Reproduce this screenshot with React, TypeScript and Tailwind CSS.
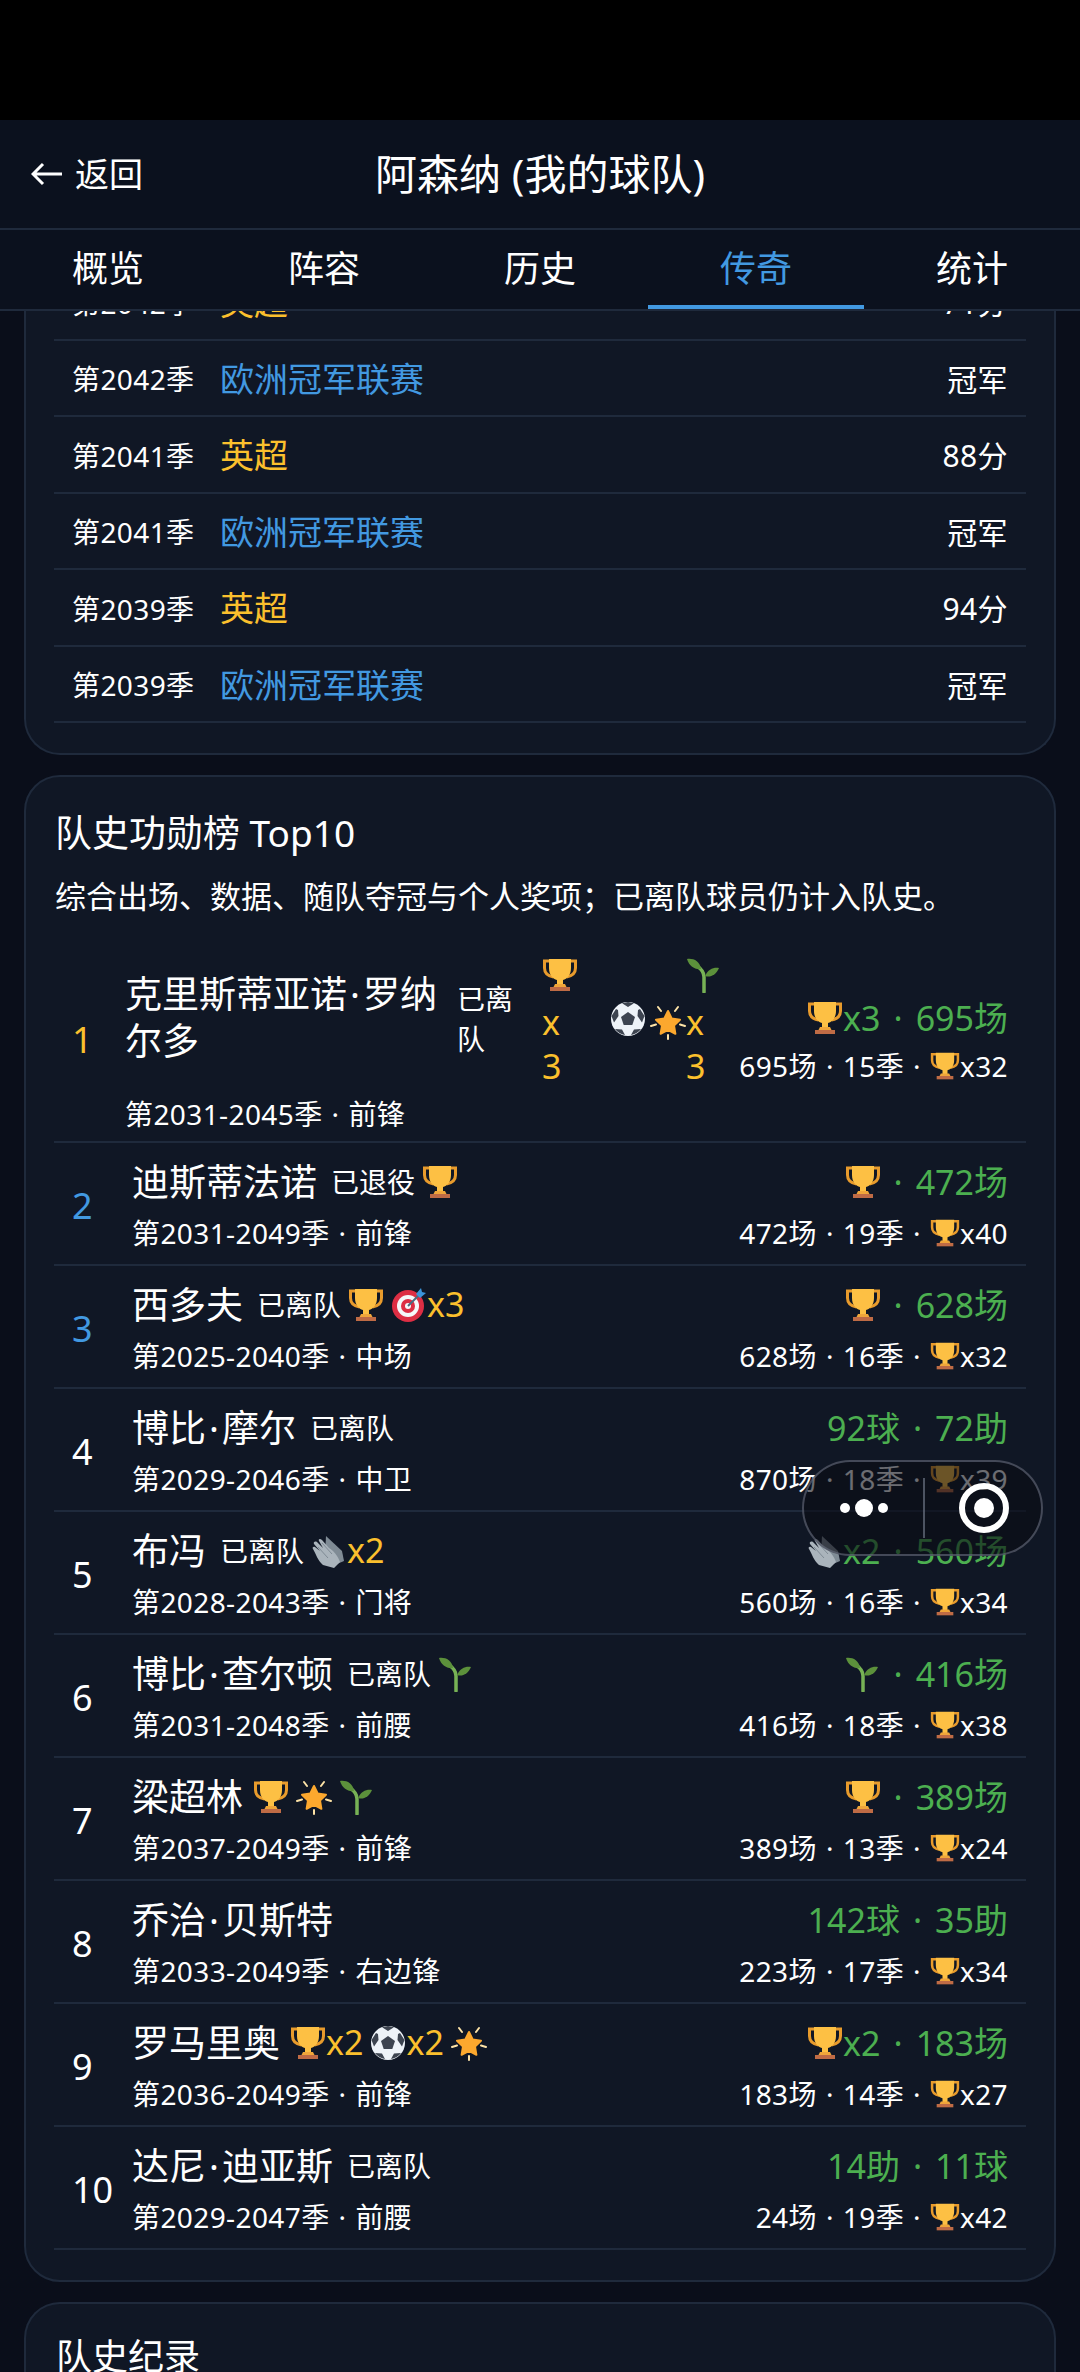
import React from 'react'

const font = { fontFamily: '"Noto Sans", "Noto Sans CJK SC", sans-serif' }

function Trophy({ size = 36 }: { size?: number }) {
  return (
    <svg width={size} height={size} viewBox="0 0 36 36" className="inline-block shrink-0">
      <path d="M8 4H2.500v7c0 5 3.500 8 9 9" fill="none" stroke="#e89b2c" strokeWidth="3" />
      <path d="M28 4h5.500v7c0 5-3.500 8-9 9" fill="none" stroke="#e89b2c" strokeWidth="3" />
      <path d="M7 2h22v9c0 7-4 11-8 12v5h-6v-5c-4-1-8-5-8-12z" fill="#fdc044" />
      <path d="M13 27h10l1.500 3h-13z" fill="#f0a63a" />
      <path d="M8 30h20v4H8z" fill="#bf6b45" />
    </svg>
  )
}

function Ball({ size = 36 }: { size?: number }) {
  return (
    <svg width={size} height={size} viewBox="0 0 36 36" className="inline-block shrink-0">
      <circle cx="18" cy="18" r="17" fill="#eef3f8" />
      <path d="M18 11l7 5-2.700 8h-8.600L11 16z" fill="#3d4450" />
      <path d="M12 2.200 18 1l6 1.200L18 6z M1.500 15 6 8l2 1 .5 6-4.500 6.500z M34.500 15 30 8l-2 1-.5 6 4.500 6.500z M5 28l7 .5 3 5.500c-4-.6-7.500-2.700-10-6z M31 28l-7 .5-3 5.500c4-.6 7.500-2.700 10-6z" fill="#3d4450" />
    </svg>
  )
}

function Star({ size = 36 }: { size?: number }) {
  return (
    <svg width={size} height={size} viewBox="0 0 36 36" className="inline-block shrink-0">
      <path d="M18 7l3.700 7.500 8.300 1.200-6 5.800 1.400 8.300-7.400-3.900-7.400 3.900 1.400-8.300-6-5.800 8.300-1.200z" fill="#fca82e" stroke="#fca82e" strokeWidth="2" strokeLinejoin="round" />
      <path d="M8 3l3 4M28 3l-3 4M1 22l5-1.500M35 22l-5-1.500M18 35v-4" stroke="#fde3a7" strokeWidth="2" strokeLinecap="round" />
    </svg>
  )
}

function Sprout({ size = 36 }: { size?: number }) {
  return (
    <svg width={size} height={size} viewBox="0 0 36 36" className="inline-block shrink-0">
      <path d="M18 35V20c0-6-4-9-7-11" fill="none" stroke="#77b255" strokeWidth="3.500" strokeLinecap="round" />
      <path d="M1 2c6-1 13 2 14 10-6 1-12-3-14-10z" fill="#5c913b" />
      <path d="M33 11c-5-1-11 1-14 8 5 2 11-1 14-8z" fill="#5c913b" />
    </svg>
  )
}

function Target({ size = 36 }: { size?: number }) {
  return (
    <svg width={size} height={size} viewBox="0 0 36 36" className="inline-block shrink-0">
      <circle cx="17" cy="19" r="16" fill="#dd2e44" />
      <circle cx="17" cy="19" r="11" fill="#f5f8fa" />
      <circle cx="17" cy="19" r="7" fill="#dd2e44" />
      <circle cx="17" cy="19" r="3" fill="#f5f8fa" />
      <path d="M17 19 29 7" stroke="#4b6a80" strokeWidth="2" />
      <path d="M25 7l5-6 1 4 4 1-6 5z" fill="#3b94d9" />
    </svg>
  )
}

function Gloves({ size = 36 }: { size?: number }) {
  return (
    <svg width={size} height={size} viewBox="0 0 36 36" className="inline-block shrink-0">
      <path d="M15 3l16 15 2 10-7 3-12-9z" fill="#7f8b95" />
      <path d="M2 16c-1-1 0-3 2-2l5 4-6-7c-1-2 1-3 3-2l6 6-4-7c-1-2 1-3 3-1l7 8c4 2 9 8 11 14l-6 6-11-3C7 28 5 21 2 16z" fill="#aab4bc" />
      <path d="M7 14l10 11M11 10l10 11M15 8l9 10" stroke="#7f8b95" strokeWidth="1" />
    </svg>
  )
}

const iconMap = { trophy: Trophy, ball: Ball, star: Star, sprout: Sprout, target: Target, gloves: Gloves }
type IconName = keyof typeof iconMap

interface Badge {
  icon: IconName
  count?: number
}

interface Legend {
  rank: number
  name: string
  status?: string
  badges: Badge[]
  meta: [string, string]
  best: Badge | null
  bestText: [string, string]
  stats: [string, string]
  cups: number
}

const seasons = [
  { season: '第2042季', league: '英超', result: '71分', gold: true },
  { season: '第2042季', league: '欧洲冠军联赛', result: '冠军', gold: false },
  { season: '第2041季', league: '英超', result: '88分', gold: true },
  { season: '第2041季', league: '欧洲冠军联赛', result: '冠军', gold: false },
  { season: '第2039季', league: '英超', result: '94分', gold: true },
  { season: '第2039季', league: '欧洲冠军联赛', result: '冠军', gold: false },
]

const legends: Legend[] = [
  { rank: 2, name: '迪斯蒂法诺', status: '已退役', badges: [{ icon: 'trophy' }], meta: ['第2031-2049季', '前锋'], best: { icon: 'trophy' }, bestText: ['', '472场'], stats: ['472场', '19季'], cups: 40 },
  { rank: 3, name: '西多夫', status: '已离队', badges: [{ icon: 'trophy' }, { icon: 'target', count: 3 }], meta: ['第2025-2040季', '中场'], best: { icon: 'trophy' }, bestText: ['', '628场'], stats: ['628场', '16季'], cups: 32 },
  { rank: 4, name: '博比·摩尔', status: '已离队', badges: [], meta: ['第2029-2046季', '中卫'], best: null, bestText: ['92球', '72助'], stats: ['870场', '18季'], cups: 39 },
  { rank: 5, name: '布冯', status: '已离队', badges: [{ icon: 'gloves', count: 2 }], meta: ['第2028-2043季', '门将'], best: { icon: 'gloves', count: 2 }, bestText: ['', '560场'], stats: ['560场', '16季'], cups: 34 },
  { rank: 6, name: '博比·查尔顿', status: '已离队', badges: [{ icon: 'sprout' }], meta: ['第2031-2048季', '前腰'], best: { icon: 'sprout' }, bestText: ['', '416场'], stats: ['416场', '18季'], cups: 38 },
  { rank: 7, name: '梁超林', badges: [{ icon: 'trophy' }, { icon: 'star' }, { icon: 'sprout' }], meta: ['第2037-2049季', '前锋'], best: { icon: 'trophy' }, bestText: ['', '389场'], stats: ['389场', '13季'], cups: 24 },
  { rank: 8, name: '乔治·贝斯特', badges: [], meta: ['第2033-2049季', '右边锋'], best: null, bestText: ['142球', '35助'], stats: ['223场', '17季'], cups: 34 },
  { rank: 9, name: '罗马里奥', badges: [{ icon: 'trophy', count: 2 }, { icon: 'ball', count: 2 }, { icon: 'star' }], meta: ['第2036-2049季', '前锋'], best: { icon: 'trophy', count: 2 }, bestText: ['', '183场'], stats: ['183场', '14季'], cups: 27 },
  { rank: 10, name: '达尼·迪亚斯', status: '已离队', badges: [], meta: ['第2029-2047季', '前腰'], best: null, bestText: ['14助', '11球'], stats: ['24场', '19季'], cups: 42 },
]

function Sep() {
  return <span className="mx-[9px]">·</span>
}

function GreenSep() {
  return <span className="mx-[13px]">·</span>
}

function Name({ text }: { text: string }) {
  const parts = text.split('·')
  return (
    <>
      {parts.map((part, i) => (
        <React.Fragment key={i}>
          {i > 0 && <span className="mx-[3px]">·</span>}
          {part}
        </React.Fragment>
      ))}
    </>
  )
}

function BadgeView({ badge }: { badge: Badge }) {
  const Icon = iconMap[badge.icon]
  return (
    <span className="inline-flex items-center">
      <Icon />
      {badge.count ? `x${badge.count}` : ''}
    </span>
  )
}

function rankColor(rank: number) {
  if (rank === 1) return 'text-[#fbc02d]'
  if (rank <= 3) return 'text-[#4299e1]'
  return 'text-white'
}

function Stats({ stats, cups }: { stats: [string, string]; cups: number }) {
  return (
    <div className="flex h-[38px] items-center justify-end whitespace-nowrap text-[28px] leading-[38px] tracking-[0.4px] text-white">
      {stats[0]}
      <Sep />
      {stats[1]}
      <Sep />
      <Trophy size={30} />x{cups}
    </div>
  )
}

function BestLine({ children }: { children: React.ReactNode }) {
  return <div className="flex h-[44px] items-center whitespace-nowrap text-[34px] leading-[44px] text-[#4caf50]">{children}</div>
}

function Meta({ meta }: { meta: [string, string] }) {
  return (
    <div className="h-[38px] whitespace-nowrap text-[28px] leading-[38px] tracking-[0.4px] text-white">
      {meta[0]}
      <Sep />
      {meta[1]}
    </div>
  )
}

function LegendRow({ item }: { item: Legend }) {
  return (
    <div className="flex h-[123px] items-center border-b-2 border-[#1f2a3c] px-[18px] pt-[4px]">
      <div className={`w-[60px] shrink-0 text-[36px] ${rankColor(item.rank)}`}>{item.rank}</div>
      <div className="flex min-w-0 flex-1 flex-col gap-[10px]">
        <div className="flex h-[44px] items-center gap-[10px] whitespace-nowrap">
          <span className="text-[37px] leading-[44px] text-white">
            <Name text={item.name} />
          </span>
          {item.status && <span className="-mr-[3px] ml-[4px] text-[28px] text-white">{item.status}</span>}
          <div className="flex items-center gap-[7px] text-[34px] text-[#fbc02d]">
            {item.badges.map((badge, i) => (
              <BadgeView key={i} badge={badge} />
            ))}
          </div>
        </div>
        <Meta meta={item.meta} />
      </div>
      <div className="flex shrink-0 flex-col items-end gap-[10px]">
        <BestLine>
          {item.best && <BadgeView badge={item.best} />}
          {item.bestText[0]}
          <GreenSep />
          {item.bestText[1]}
        </BestLine>
        <Stats stats={item.stats} cups={item.cups} />
      </div>
    </div>
  )
}

function FirstRow() {
  return (
    <div className="flex h-[204px] items-center border-b-2 border-[#1f2a3c] px-[18px]">
      <div className="w-[53px] shrink-0 text-[36px] text-[#fbc02d]">1</div>
      <div className="flex w-[555px] shrink-0 flex-col gap-[8px]">
        <div className="flex h-[140px] items-center">
          <div className="w-[332px] shrink-0 text-[37px] leading-[47px] text-white">克里斯蒂亚诺<span className="mx-[3px]">·</span>罗纳尔多</div>
          <div className="mt-[4px] w-[58px] shrink-0 text-[28px] leading-[40px] text-white">已离队</div>
          <div className="ml-[27px] mt-[3px] flex shrink-0 items-center text-[34px] leading-[44px] text-[#fbc02d]">
            <div className="flex w-[68px] flex-col">
              <span className="mb-[6px]">
                <Trophy />
              </span>
              <span>x</span>
              <span>3</span>
            </div>
            <Ball />
            <span className="ml-[4px]">
              <Star />
            </span>
            <div className="flex flex-col">
              <span className="mb-[6px]">
                <Sprout />
              </span>
              <span>x</span>
              <span>3</span>
            </div>
          </div>
        </div>
        <Meta meta={['第2031-2045季', '前锋']} />
      </div>
      <div className="flex flex-1 flex-col items-end gap-[7px]">
        <BestLine>
          <BadgeView badge={{ icon: 'trophy', count: 3 }} />
          <GreenSep />
          695场
        </BestLine>
        <Stats stats={['695场', '15季']} cups={32} />
      </div>
    </div>
  )
}

export default function App() {
  const tabs = ['概览', '阵容', '历史', '传奇', '统计']

  return (
    <div className="relative flex h-[2372px] w-[1080px] flex-col overflow-hidden bg-[#0a0e1a]" style={font}>
      <div className="h-[120px] shrink-0 bg-black" />

      <header className="relative flex h-[110px] shrink-0 items-center justify-center border-b-2 border-[#1f2a3c] bg-[#0b111e]">
        <div className="absolute left-[31px] top-[34px] flex items-center gap-[12px] text-[34px] leading-[40px] text-white">
          <svg width="32" height="24" viewBox="0 0 32 24" fill="none" stroke="white" strokeWidth="3">
            <path d="M31 12H3M12 2 2 12l10 10" />
          </svg>
          返回
        </div>
        <h1 className="text-[42px] font-normal leading-[48px] text-white">阿森纳 (我的球队)</h1>
      </header>

      <nav className="grid h-[81px] shrink-0 grid-cols-5 border-b-2 border-[#1f2a3c] bg-[#0b111e]">
        {tabs.map((tab) => (
          <div
            key={tab}
            className={`flex items-center justify-center border-b-4 pt-[3px] text-[36px] ${
              tab === '传奇' ? 'border-[#4299e1] text-[#4299e1]' : 'border-transparent text-white'
            }`}
          >
            {tab}
          </div>
        ))}
      </nav>

      <main className="min-h-0 flex-1 overflow-hidden">
        <div className="-mt-[47px] flex flex-col gap-[20px] px-[24px]">
          <section className="rounded-b-[36px] border-2 border-t-0 border-[#1f2a3c] bg-[#101725] px-[28px] pb-[30px]">
            {seasons.map((row, i) => (
              <div key={i} className="flex h-[76.500px] items-center border-b-2 border-[#1f2a3c] px-[18px] pt-[3px]">
                <span className="w-[148px] shrink-0 text-[28px] tracking-[0.4px] text-white">{row.season}</span>
                <span className={`flex-1 text-[34px] ${row.gold ? 'text-[#fbc02d]' : 'text-[#4299e1]'}`}>{row.league}</span>
                <span className="text-[30px] tracking-[0.4px] text-white">{row.result}</span>
              </div>
            ))}
          </section>

          <section className="rounded-[36px] border-2 border-[#1f2a3c] bg-[#101725] px-[28px] pb-[30px] pt-[33px]">
            <h2 className="ml-[1px] text-[37px] font-normal leading-[46px] text-white">队史功勋榜 Top10</h2>
            <p className="ml-[1px] mt-[17px] text-[31px] leading-[46px] text-white">综合出场、数据、随队夺冠与个人奖项；已离队球员仍计入队史。</p>
            <div className="mt-[20px]">
              <FirstRow />
              {legends.map((item) => (
                <LegendRow key={item.rank} item={item} />
              ))}
            </div>
          </section>

          <section className="rounded-t-[36px] border-2 border-b-0 border-[#1f2a3c] bg-[#101725] px-[30px] pt-[30px]">
            <h2 className="text-[36px] font-normal leading-[46px] text-white">队史纪录</h2>
          </section>
        </div>
      </main>

      {/* floating mini-program capsule */}
      <div className="absolute left-[802px] top-[1460px] flex h-[96px] w-[241px] items-center rounded-full border-2 border-gray-500/60 bg-[#0a0c14]/60">
        <div className="flex w-[119px] items-center justify-center gap-[5px]">
          <span className="h-[10px] w-[10px] rounded-full bg-white" />
          <span className="h-[18px] w-[18px] rounded-full bg-white" />
          <span className="h-[10px] w-[10px] rounded-full bg-white" />
        </div>
        <div className="h-[60px] w-[2px] bg-gray-500/70" />
        <div className="flex flex-1 items-center justify-center pl-[2px]">
          <div className="flex h-[50px] w-[50px] items-center justify-center rounded-full border-[6px] border-white">
            <span className="h-[20px] w-[20px] rounded-full bg-white" />
          </div>
        </div>
      </div>
    </div>
  )
}
